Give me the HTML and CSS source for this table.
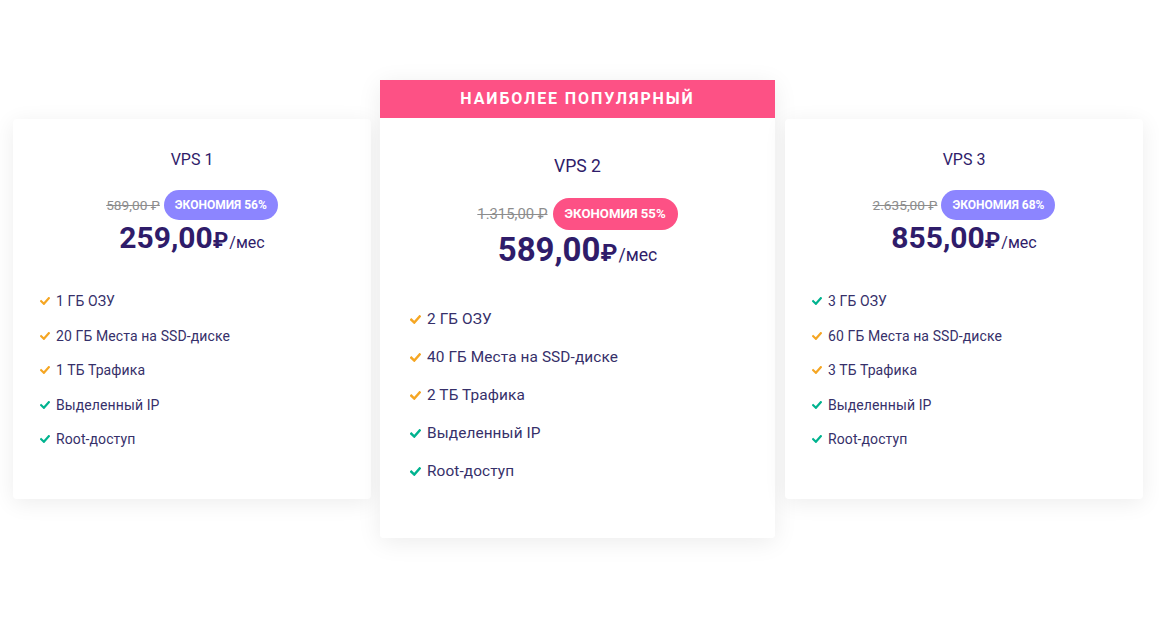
FILE: index.html
```html
<!DOCTYPE html>
<html lang="ru">
<head>
<meta charset="utf-8">
<title>VPS</title>
<link rel="stylesheet" href="styles.css">
</head>
<body>
<section class="plans">
  <div class="card">
    <h3 class="title">VPS 1</h3>
    <div class="discount"><span class="old">589,00 ₽</span><span class="badge">ЭКОНОМИЯ 56%</span></div>
    <div class="price"><span class="amount">259,00</span><span class="cur">₽</span><span class="per">/мес</span></div>
    <ul class="features">
      <li><svg class="chk orange" viewBox="0 0 10 8"><path d="M1.2 4.2 L3.9 6.8 L8.8 1.2"/></svg>1 ГБ ОЗУ</li>
      <li><svg class="chk orange" viewBox="0 0 10 8"><path d="M1.2 4.2 L3.9 6.8 L8.8 1.2"/></svg>20 ГБ Места на SSD-диске</li>
      <li><svg class="chk orange" viewBox="0 0 10 8"><path d="M1.2 4.2 L3.9 6.8 L8.8 1.2"/></svg>1 ТБ Трафика</li>
      <li><svg class="chk green" viewBox="0 0 10 8"><path d="M1.2 4.2 L3.9 6.8 L8.8 1.2"/></svg>Выделенный IP</li>
      <li><svg class="chk green" viewBox="0 0 10 8"><path d="M1.2 4.2 L3.9 6.8 L8.8 1.2"/></svg>Root-доступ</li>
    </ul>
  </div>

  <div class="featured">
    <div class="ribbon">НАИБОЛЕЕ ПОПУЛЯРНЫЙ</div>
    <div class="card card-big">
      <h3 class="title">VPS 2</h3>
      <div class="discount"><span class="old">1.315,00 ₽</span><span class="badge badge-pink">ЭКОНОМИЯ 55%</span></div>
      <div class="price"><span class="amount">589,00</span><span class="cur">₽</span><span class="per">/мес</span></div>
      <ul class="features">
        <li><svg class="chk orange" viewBox="0 0 10 8"><path d="M1.2 4.2 L3.9 6.8 L8.8 1.2"/></svg>2 ГБ ОЗУ</li>
        <li><svg class="chk orange" viewBox="0 0 10 8"><path d="M1.2 4.2 L3.9 6.8 L8.8 1.2"/></svg>40 ГБ Места на SSD-диске</li>
        <li><svg class="chk orange" viewBox="0 0 10 8"><path d="M1.2 4.2 L3.9 6.8 L8.8 1.2"/></svg>2 ТБ Трафика</li>
        <li><svg class="chk green" viewBox="0 0 10 8"><path d="M1.2 4.2 L3.9 6.8 L8.8 1.2"/></svg>Выделенный IP</li>
        <li><svg class="chk green" viewBox="0 0 10 8"><path d="M1.2 4.2 L3.9 6.8 L8.8 1.2"/></svg>Root-доступ</li>
      </ul>
    </div>
  </div>

  <div class="card">
    <h3 class="title">VPS 3</h3>
    <div class="discount"><span class="old">2.635,00 ₽</span><span class="badge">ЭКОНОМИЯ 68%</span></div>
    <div class="price"><span class="amount">855,00</span><span class="cur">₽</span><span class="per">/мес</span></div>
    <ul class="features">
      <li><svg class="chk green" viewBox="0 0 10 8"><path d="M1.2 4.2 L3.9 6.8 L8.8 1.2"/></svg>3 ГБ ОЗУ</li>
      <li><svg class="chk orange" viewBox="0 0 10 8"><path d="M1.2 4.2 L3.9 6.8 L8.8 1.2"/></svg>60 ГБ Места на SSD-диске</li>
      <li><svg class="chk orange" viewBox="0 0 10 8"><path d="M1.2 4.2 L3.9 6.8 L8.8 1.2"/></svg>3 ТБ Трафика</li>
      <li><svg class="chk green" viewBox="0 0 10 8"><path d="M1.2 4.2 L3.9 6.8 L8.8 1.2"/></svg>Выделенный IP</li>
      <li><svg class="chk green" viewBox="0 0 10 8"><path d="M1.2 4.2 L3.9 6.8 L8.8 1.2"/></svg>Root-доступ</li>
    </ul>
  </div>
</section>
</body>
</html>
```

FILE: styles.css
```css
* { box-sizing: border-box; }
html, body { margin: 0; background: #fff; }
body {
  font-family: Roboto, "Liberation Sans", Arial, sans-serif;
  color: #2f1c6a;
  width: 1159px;
  height: 620px;
  overflow: hidden;
}
.plans {
  display: flex;
  align-items: flex-start;
  padding: 80px 0 0 13px;
}
.card {
  width: 358px;
  margin-top: 39px;
  background: #fff;
  border-radius: 4px;
  box-shadow: 0 4px 22px rgba(0, 0, 0, 0.075);
  padding: 29px 0 50px;
  text-align: center;
}
.featured {
  width: 395px;
  margin: 0 10px 0 9px;
  border-radius: 4px;
  box-shadow: 0 4px 24px rgba(0, 0, 0, 0.08);
}
.ribbon {
  height: 38px;
  background: #fd5185;
  color: #fff;
  font-weight: 700;
  font-size: 16px;
  letter-spacing: 1.9px;
  line-height: 38px;
  text-align: center;
}
.card-big {
  width: 100%;
  margin-top: 0;
  box-shadow: none;
  border-radius: 0 0 4px 4px;
  padding: 35px 0 56px;
}
.title {
  margin: 0;
  font-size: 16px;
  line-height: 24px;
  font-weight: 400;
  color: #2f1c6a;
}
.discount {
  margin-top: 18px;
  display: flex;
  justify-content: center;
  align-items: center;
  gap: 4px;
  height: 30px;
}
.old {
  font-size: 13.7px;
  color: #8d8d8d;
  text-decoration: line-through;
}
.badge {
  height: 30px;
  line-height: 30px;
  padding: 0 11px;
  border-radius: 15px;
  background: #8c85ff;
  color: #fff;
  font-weight: 700;
  font-size: 12px;
}
.badge-pink { background: #fd5185; }
.price {
  line-height: 36px;
  height: 36px;
  color: #2f1c6a;
  white-space: nowrap;
}
.amount { font-size: 30px; font-weight: 700; }
.cur { font-size: 22px; font-weight: 700; }
.per { font-size: 16px; margin-left: 1px; }
.features {
  list-style: none;
  margin: 35px 0 0;
  padding: 0 0 0 27px;
  display: flex;
  flex-direction: column;
  gap: 14.5px;
  text-align: left;
}
.features li {
  font-size: 14px;
  line-height: 20px;
  letter-spacing: 0.1px;
  color: #36306a;
  display: flex;
  align-items: center;
}
.chk {
  width: 10px;
  height: 8px;
  margin-right: 6px;
  fill: none;
  stroke-width: 2.2;
  stroke-linecap: square;
}
.orange { stroke: #f5a623; }
.green { stroke: #00b38f; }

.card-big .title { font-size: 17.6px; line-height: 26px; }
.card-big .discount { margin-top: 19px; height: 32px; gap: 5px; }
.card-big .old { font-size: 14.8px; }
.card-big .badge { height: 32px; line-height: 32px; border-radius: 16px; font-size: 13.2px; padding: 0 12px; }
.card-big .price { height: 40px; line-height: 40px; }
.card-big .amount { font-size: 33px; }
.card-big .cur { font-size: 24px; }
.card-big .per { font-size: 17.6px; }
.card-big .features { margin-top: 38px; padding-left: 30px; gap: 16px; }
.card-big .features li { font-size: 15.4px; line-height: 22px; }
.card-big .chk { width: 11px; height: 9px; margin-right: 6px; }
```
